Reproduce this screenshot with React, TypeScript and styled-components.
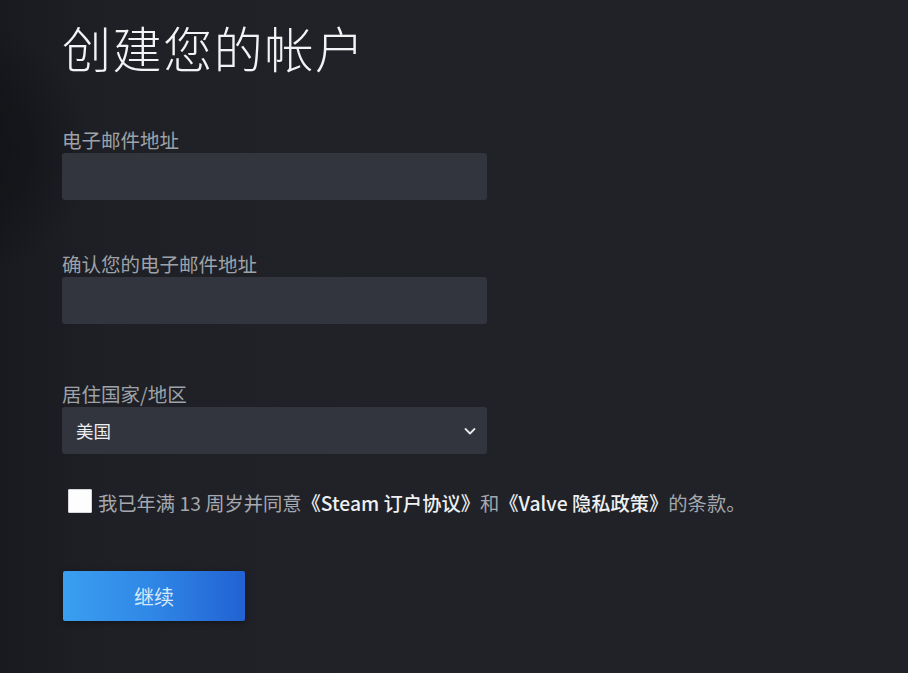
import React, { useState } from 'react'
import styled, { createGlobalStyle } from 'styled-components'

const GlobalStyle = createGlobalStyle`
  html, body {
    margin: 0;
    padding: 0;
    background: #202228;
  }
  body {
    font-family: "Noto Sans CJK SC", "Noto Sans", sans-serif;
  }
`

const Page = styled.div`
  position: relative;
  min-height: 673px;
  padding: 17px 0 0 62px;
  box-sizing: border-box;
  overflow: hidden;
  background:
    radial-gradient(circle at -40px 150px, rgba(12, 13, 16, 0.55) 0, rgba(12, 13, 16, 0.35) 70px, rgba(12, 13, 16, 0) 130px),
    linear-gradient(90deg, #191a1f 0%, #1e2026 12%, #202228 40%, #202228 100%);
`

const Form = styled.form`
  width: 425px;
  display: flex;
  flex-direction: column;
`

const Title = styled.h1`
  margin: 0 0 50px;
  font-size: 49px;
  line-height: 60px;
  font-weight: 300;
  color: #f2f3f5;
  letter-spacing: 1.6px;
  white-space: nowrap;
`

const Field = styled.div<{ $gap?: number }>`
  display: flex;
  flex-direction: column;
  margin-bottom: ${({ $gap }) => $gap ?? 51}px;
`

const Label = styled.label`
  font-size: 19.5px;
  line-height: 26px;
  color: #9ea2a9;
  margin-bottom: 0;
  white-space: nowrap;
`

const Input = styled.input`
  height: 47px;
  box-sizing: border-box;
  border: none;
  outline: none;
  border-radius: 3px;
  background: #32353e;
  color: #fff;
  font-size: 17px;
  padding: 0 14px;
  font-family: inherit;
`

const SelectBox = styled.div`
  position: relative;
  height: 47px;
  border-radius: 3px;
  background: #32353e;
  display: flex;
  align-items: center;
  padding: 0 10px 0 14px;
  justify-content: space-between;
  color: #eceef0;
  font-size: 17.5px;
`

const Chevron = () => (
  <svg width="14" height="14" viewBox="0 0 14 14" fill="none">
    <path d="M2.5 5 L7 9.5 L11.5 5" stroke="#e6e7ea" strokeWidth="1.8" strokeLinecap="round" strokeLinejoin="round" />
  </svg>
)

const AgreeRow = styled.label`
  display: flex;
  align-items: center;
  gap: 6px;
  margin: 35px 0 0 6px;
  font-size: 19.3px;
  color: #a5a8ae;
  white-space: nowrap;
`

const CheckBox = styled.span<{ $checked: boolean }>`
  width: 24px;
  height: 24px;
  border-radius: 2px;
  background: #fdfdfd;
  box-shadow: inset 0 0 0 1px #d6d7da;
  display: inline-flex;
  align-items: center;
  justify-content: center;
  flex-shrink: 0;
  margin-top: -4px;
  color: #1a73e8;
`

const Strong = styled.span`
  color: #eef0f2;
  font-weight: 500;
`

const Button = styled.button`
  margin: 54px 0 0 1px;
  width: 182px;
  height: 50px;
  border: none;
  border-radius: 2px;
  background: linear-gradient(90deg, #3a9ff0 0%, #2f86e6 50%, #2262d2 100%);
  color: #d6e8fa;
  font-size: 20px;
  font-family: inherit;
  cursor: pointer;
  box-shadow: 0 2px 6px rgba(0, 0, 0, 0.35);
`

export default function App() {
  const [checked, setChecked] = useState(false)

  return (
    <>
      <GlobalStyle />
      <Page>
        <Form onSubmit={(e) => e.preventDefault()}>
          <Title>创建您的帐户</Title>
          <Field>
            <Label>电子邮件地址</Label>
            <Input type="email" />
          </Field>
          <Field $gap={57}>
            <Label>确认您的电子邮件地址</Label>
            <Input type="email" />
          </Field>
          <Field $gap={0}>
            <Label>居住国家/地区</Label>
            <SelectBox>
              <span>美国</span>
              <Chevron />
            </SelectBox>
          </Field>
          <AgreeRow onClick={() => setChecked(!checked)}>
            <CheckBox $checked={checked}>{checked ? '✓' : ''}</CheckBox>
            <span>
              我已年满 13 周岁并同意<Strong>《Steam 订户协议》</Strong>和<Strong>《Valve 隐私政策》</Strong>的条款。
            </span>
          </AgreeRow>
          <div>
            <Button type="submit">继续</Button>
          </div>
        </Form>
      </Page>
    </>
  )
}
